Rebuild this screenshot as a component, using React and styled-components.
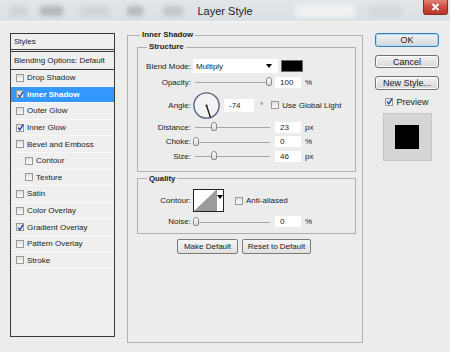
import styled, { createGlobalStyle } from 'styled-components';

const GlobalStyle = createGlobalStyle`
  html, body {
    margin: 0;
    padding: 0;
  }
  body {
    background: #ececec;
    font-family: "Liberation Sans", Arial, sans-serif;
    color: #1b1b1b;
  }
`;

const styleRows = [
    { name: 'Drop Shadow' },
    { name: 'Inner Shadow', checked: true, selected: true },
    { name: 'Outer Glow' },
    { name: 'Inner Glow', checked: true },
    { name: 'Bevel and Emboss' },
    { name: 'Contour', indent: true },
    { name: 'Texture', indent: true },
    { name: 'Satin' },
    { name: 'Color Overlay' },
    { name: 'Gradient Overlay', checked: true },
    { name: 'Pattern Overlay' },
    { name: 'Stroke' },
];

function Check({ checked, size }) {
    return (
        <Box $size={size}>
            {checked && (
                <svg width="7" height="7" viewBox="0 0 7 7">
                    <path d="M1 3.6 L2.8 5.8 L6.2 0.6" fill="none" stroke="#1d3f9f" strokeWidth="1.3" />
                </svg>
            )}
        </Box>
    );
}

function Slider({ pos }) {
    return (
        <Track>
            <Thumb style={{ left: `calc((100% - 6px) * ${pos / 100})` }} />
        </Track>
    );
}

export default function App() {
    return (
        <Window>
            <GlobalStyle />
            <TitleBar>
                <Blurs>
                    <Blob $w={17} $ml={10} $c="#cfd4d8" />
                    <Blob $w={23} $ml={13} $c="#b4b9be" />
                    <Blob $w={30} $ml={17} $c="#d0d5d9" />
                    <Blob $w={16} $ml={17} $c="#b7bcc1" />
                    <Blob $w={20} $ml={20} $c="#c2c7cc" />
                </Blurs>
                <Title>Layer Style</Title>
                <Blurs>
                    <Blob $w={60} $ml={42} $c="#eef0f2" $h={14} />
                    <Blob $w={33} $ml={14} $c="#d3d8dc" />
                    <CloseButton>
                        <svg width="9" height="8" viewBox="0 0 9 8">
                            <path d="M1.5 1 L7.5 7 M7.5 1 L1.5 7" stroke="#fff" strokeWidth="2" />
                        </svg>
                    </CloseButton>
                </Blurs>
            </TitleBar>
            <Body>
                <StylesPanel>
                    <PanelHeader>Styles</PanelHeader>
                    <BlendingRow>Blending Options: Default</BlendingRow>
                    {styleRows.map(r => (
                        <StyleRow key={r.name} $indent={r.indent} $selected={r.selected}>
                            <Check checked={r.checked} />
                            <span>{r.name}</span>
                        </StyleRow>
                    ))}
                </StylesPanel>

                <Group $outer>
                    <Legend $offset={3}>Inner Shadow</Legend>
                    <Group>
                        <Legend $offset={9}>Structure</Legend>
                        <Field $h={16}>
                            <Label>Blend Mode:</Label>
                            <Controls>
                                <Select>
                                    <span>Multiply</span>
                                    <Caret />
                                </Select>
                                <Swatch />
                            </Controls>
                        </Field>
                        <Field $h={16}>
                            <Label>Opacity:</Label>
                            <Controls>
                                <Slider pos={100} />
                                <NumInput>100</NumInput>
                                <Unit>%</Unit>
                            </Controls>
                        </Field>
                        <Field $h={30}>
                            <Label>Angle:</Label>
                            <Controls>
                                <svg width="27" height="27" viewBox="0 0 27 27">
                                    <circle cx="13.5" cy="13.5" r="12.6" fill="#f3f3f3" stroke="#56627f" strokeWidth="1.4" />
                                    <line x1="13.5" y1="13.5" x2="17.4" y2="25.2" stroke="#111" strokeWidth="1.3" />
                                    <circle cx="13.5" cy="13.5" r="1" fill="#111" />
                                </svg>
                                <NumInput $w={30} $h={13} $ml={4}>-74</NumInput>
                                <Unit $ml={6}>°</Unit>
                                <CheckLabel $ml={8}>
                                    <Check />
                                    <span>Use Global Light</span>
                                </CheckLabel>
                            </Controls>
                        </Field>
                        <Field $h={14.5}>
                            <Label>Distance:</Label>
                            <Controls>
                                <Slider pos={24} />
                                <NumInput>23</NumInput>
                                <Unit>px</Unit>
                            </Controls>
                        </Field>
                        <Field $h={14.5}>
                            <Label>Choke:</Label>
                            <Controls>
                                <Slider pos={0} />
                                <NumInput>0</NumInput>
                                <Unit>%</Unit>
                            </Controls>
                        </Field>
                        <Field $h={14.5}>
                            <Label>Size:</Label>
                            <Controls>
                                <Slider pos={24} />
                                <NumInput>46</NumInput>
                                <Unit>px</Unit>
                            </Controls>
                        </Field>
                    </Group>

                    <Group $quality>
                        <Legend $offset={9}>Quality</Legend>
                        <Field $h={26}>
                            <Label>Contour:</Label>
                            <Controls>
                                <ContourPicker>
                                    <svg width="22" height="21" viewBox="0 0 22 21">
                                        <rect width="22" height="21" fill="#fff" />
                                        <polygon points="0,21 22,0 22,21" fill="#9b9b9b" />
                                    </svg>
                                    <ContourArrow>
                                        <Caret />
                                    </ContourArrow>
                                </ContourPicker>
                                <CheckLabel $ml={11}>
                                    <Check />
                                    <span>Anti-aliased</span>
                                </CheckLabel>
                            </Controls>
                        </Field>
                        <Field $h={16}>
                            <Label>Noise:</Label>
                            <Controls>
                                <Slider pos={0} />
                                <NumInput>0</NumInput>
                                <Unit>%</Unit>
                            </Controls>
                        </Field>
                    </Group>

                    <ButtonRow>
                        <SmallButton $w={61}>Make Default</SmallButton>
                        <SmallButton $w={69}>Reset to Default</SmallButton>
                    </ButtonRow>
                </Group>

                <Side>
                    <DialogButton $primary>OK</DialogButton>
                    <DialogButton>Cancel</DialogButton>
                    <DialogButton>New Style...</DialogButton>
                    <PreviewToggle>
                        <Check checked />
                        <span>Preview</span>
                    </PreviewToggle>
                    <PreviewBox>
                        <PreviewSquare />
                    </PreviewBox>
                </Side>
            </Body>
        </Window>
    );
}

const Window = styled.div`
    width: 450px;
    height: 352px;
    overflow: hidden;
    display: flex;
    flex-direction: column;
    background: #ececec;
`;
const TitleBar = styled.div`
    height: 21px;
    flex: none;
    display: grid;
    grid-template-columns: 1fr auto 1fr;
    background: linear-gradient(#e2e6e9, #dadfe3);
    border-bottom: 1px solid #f5f6f7;
`;
const Blurs = styled.div`
    display: flex;
    align-items: center;
    height: 21px;
`;
const Blob = styled.span`
    flex: none;
    width: ${p => p.$w}px;
    height: ${p => p.$h || 10}px;
    margin-left: ${p => p.$ml}px;
    background: ${p => p.$c};
    border-radius: 2px;
    filter: blur(2px);
`;
const Title = styled.div`
    font-size: 11px;
    line-height: 23px;
    color: #1e1e1e;
    white-space: nowrap;
`;
const CloseButton = styled.div`
    align-self: flex-start;
    margin-left: auto;
    margin-right: 2px;
    width: 25px;
    height: 15px;
    box-sizing: border-box;
    display: flex;
    align-items: center;
    justify-content: center;
    background: linear-gradient(#e48476, #cd4a3e 50%, #b9362c);
    border: 1px solid #8e2b23;
    border-top: none;
    border-radius: 0 0 3px 3px;
`;
const Body = styled.div`
    display: flex;
    align-items: flex-start;
    padding: 8px 0 0 10px;
`;
const StylesPanel = styled.div`
    width: 105px;
    height: 304px;
    margin-top: 3px;
    box-sizing: border-box;
    border: 1px solid #3a3a3a;
    background: #efefef;
    display: flex;
    flex-direction: column;
    font-size: 8px;
`;
const PanelHeader = styled.div`
    height: 15px;
    line-height: 15px;
    padding-left: 3px;
    border-bottom: 3px double #3a3a3a;
`;
const BlendingRow = styled.div`
    height: 17px;
    line-height: 17px;
    padding-left: 3px;
    border-bottom: 1px solid #3a3a3a;
    white-space: nowrap;
`;
const StyleRow = styled.div`
    height: 16.6px;
    box-sizing: border-box;
    display: flex;
    align-items: center;
    gap: 3px;
    padding-left: ${p => (p.$indent ? 14 : 5)}px;
    border-bottom: 1px solid #f8f8f8;
    white-space: nowrap;
    background: ${p => (p.$selected ? '#3399ff' : 'transparent')};
    color: ${p => (p.$selected ? '#fff' : 'inherit')};
    font-weight: ${p => (p.$selected ? 'bold' : 'normal')};
`;
const Box = styled.span`
    flex: none;
    width: 6px;
    height: 6px;
    border: 1px solid #999;
    background: linear-gradient(#dedede, #fafafa);
    display: flex;
    align-items: center;
    justify-content: center;
    svg {
        flex: none;
    }
`;
const Group = styled.fieldset`
    margin: ${p => (p.$outer ? '0 0 0 12px' : p.$quality ? '2px 0 0' : '0')};
    padding: ${p => (p.$outer ? '2px 0 0 9px' : p.$quality ? '4px 0 3px' : '6px 0 7px')};
    width: ${p => (p.$outer ? 236 : 219)}px;
    height: ${p => (p.$outer ? '313px' : 'auto')};
    box-sizing: border-box;
    min-width: 0;
    border: 1px solid #b0b0b0;
`;
const Legend = styled.legend`
    margin-left: ${p => p.$offset}px;
    padding: 0 2px;
    font-size: 7.8px;
    font-weight: bold;
    line-height: 10px;
`;
const Field = styled.div`
    height: ${p => p.$h}px;
    display: grid;
    grid-template-columns: 53px auto;
    column-gap: 2px;
    align-items: center;
    font-size: 8px;
`;
const Label = styled.div`
    text-align: right;
    white-space: nowrap;
`;
const Controls = styled.div`
    display: flex;
    align-items: center;
    white-space: nowrap;
`;
const Select = styled.div`
    width: 85px;
    height: 14px;
    box-sizing: border-box;
    background: #fff;
    display: flex;
    align-items: center;
    justify-content: space-between;
    padding: 0 6px 0 3px;
`;
const Caret = styled.span`
    width: 0;
    height: 0;
    border-left: 3px solid transparent;
    border-right: 3px solid transparent;
    border-top: 4px solid #000;
`;
const Swatch = styled.div`
    width: 22px;
    height: 12px;
    margin-left: 3px;
    box-sizing: border-box;
    background: #000;
    border: 1px solid #6c6c6c;
`;
const Track = styled.div`
    position: relative;
    width: 79px;
    height: 10px;
    flex: none;
    &::before {
        content: '';
        position: absolute;
        left: 2px;
        right: 2px;
        top: 5px;
        height: 1px;
        background: #a5a5a5;
    }
`;
const Thumb = styled.span`
    position: absolute;
    top: 0;
    width: 6px;
    height: 9px;
    box-sizing: border-box;
    border: 1px solid #8a8a8a;
    border-radius: 3px 3px 2px 2px;
    background: linear-gradient(#ffffff, #d9d9d9);
`;
const NumInput = styled.div`
    width: ${p => p.$w || 26}px;
    height: ${p => p.$h || 11}px;
    margin-left: ${p => (p.$ml === undefined ? 3 : p.$ml)}px;
    box-sizing: border-box;
    background: #fff;
    padding-left: 5px;
    line-height: ${p => p.$h || 11}px;
`;
const Unit = styled.span`
    margin-left: ${p => (p.$ml === undefined ? 4 : p.$ml)}px;
`;
const CheckLabel = styled.span`
    display: flex;
    align-items: center;
    gap: 3px;
    margin-left: ${p => p.$ml}px;
`;
const ContourPicker = styled.div`
    display: flex;
    height: 23px;
    box-sizing: border-box;
    border: 1px solid #222;
`;
const ContourArrow = styled.div`
    width: 7px;
    background: #fff;
    border-left: 1px solid #9a9a9a;
    display: flex;
    justify-content: center;
    padding-top: 5px;
    box-sizing: border-box;
`;
const ButtonRow = styled.div`
    width: 219px;
    box-sizing: border-box;
    padding-right: 5px;
    margin-top: 5px;
    display: flex;
    justify-content: center;
    gap: 4px;
`;
const SmallButton = styled.div`
    width: ${p => p.$w}px;
    height: 15px;
    box-sizing: border-box;
    border: 1px solid #7a7a7a;
    border-radius: 2px;
    background: linear-gradient(#f6f6f6, #e0e0e0);
    font-size: 8px;
    line-height: 13px;
    text-align: center;
    white-space: nowrap;
`;
const Side = styled.div`
    width: 64px;
    margin: 3px 0 0 12px;
    display: flex;
    flex-direction: column;
    align-items: stretch;
    gap: 8px;
`;
const DialogButton = styled.div`
    height: 13.5px;
    box-sizing: border-box;
    border: 1px solid ${p => (p.$primary ? '#3d7fb3' : '#727272')};
    box-shadow: ${p => (p.$primary ? 'inset 0 0 0 1px #a6dcf7' : 'inset 0 0 0 1px #fbfbfb')};
    border-radius: 3px;
    background: linear-gradient(#f5f5f5, #e4e4e4 50%, #d8d8d8);
    font-size: 9px;
    line-height: 12px;
    text-align: center;
    white-space: nowrap;
`;
const PreviewToggle = styled.div`
    margin-top: -1px;
    height: 10px;
    display: flex;
    align-items: center;
    justify-content: center;
    gap: 3px;
    font-size: 9px;
`;
const PreviewBox = styled.div`
    align-self: center;
    margin-top: -2px;
    width: 49px;
    height: 48px;
    box-sizing: border-box;
    background: #d5d5d5;
    border: 1px solid #c6c6c6;
    display: flex;
    align-items: center;
    justify-content: center;
`;
const PreviewSquare = styled.div`
    width: 24px;
    height: 24px;
    background: #000;
`;
